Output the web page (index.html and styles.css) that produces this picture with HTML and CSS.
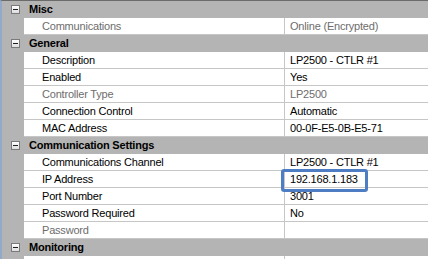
FILE: index.html
```html
<!DOCTYPE html>
<html lang="en">
<head>
    <meta charset="UTF-8">
    <title>Controller Properties</title>
    <link rel="stylesheet" href="styles.css">
</head>
<body>
    <div class="grid">
        <!-- Misc -->
        <div class="category"><span class="margin"><span class="toggle"></span></span><span class="cat-name">Misc</span></div>
        <div class="prop disabled"><span class="margin"></span><span class="name">Communications</span><span class="value">Online (Encrypted)</span></div>

        <!-- General -->
        <div class="category"><span class="margin"><span class="toggle"></span></span><span class="cat-name">General</span></div>
        <div class="prop"><span class="margin"></span><span class="name">Description</span><span class="value">LP2500 - CTLR #1</span></div>
        <div class="prop"><span class="margin"></span><span class="name">Enabled</span><span class="value">Yes</span></div>
        <div class="prop disabled"><span class="margin"></span><span class="name">Controller Type</span><span class="value">LP2500</span></div>
        <div class="prop"><span class="margin"></span><span class="name">Connection Control</span><span class="value">Automatic</span></div>
        <div class="prop"><span class="margin"></span><span class="name">MAC Address</span><span class="value">00-0F-E5-0B-E5-71</span></div>

        <!-- Communication Settings -->
        <div class="category"><span class="margin"><span class="toggle"></span></span><span class="cat-name">Communication Settings</span></div>
        <div class="prop"><span class="margin"></span><span class="name">Communications Channel</span><span class="value">LP2500 - CTLR #1</span></div>
        <div class="prop"><span class="margin"></span><span class="name">IP Address</span><span class="value callout">192.168.1.183</span></div>
        <div class="prop"><span class="margin"></span><span class="name">Port Number</span><span class="value">3001</span></div>
        <div class="prop"><span class="margin"></span><span class="name">Password Required</span><span class="value">No</span></div>
        <div class="prop disabled"><span class="margin"></span><span class="name">Password</span><span class="value"></span></div>

        <!-- Monitoring -->
        <div class="category"><span class="margin"><span class="toggle"></span></span><span class="cat-name">Monitoring</span></div>
        <div class="prop"><span class="margin"></span><span class="name"></span><span class="value"></span></div>
    </div>
</body>
</html>
```

FILE: styles.css
```css
body {
    margin: 0;
    background-color: #ffffff;
    font-family: "Liberation Sans", Arial, sans-serif;
    font-size: 11px;
    letter-spacing: -0.2px;
    color: #000000;
    overflow: hidden;
}

.grid {
    width: 428px;
    height: 259px;
    border-top: 1px solid #6b6b6b;
    border-left: 2px solid #93a9c9;
    box-sizing: border-box;
    background-color: #b4b4b4;
    overflow: hidden;
}

.category,
.prop {
    display: grid;
    grid-template-columns: 22px 260px 1fr;
    height: 17px;
    line-height: 16px;
}

.margin {
    display: flex;
    align-items: center;
    padding-left: 9px;
    background-color: #b4b4b4;
}

.category .cat-name {
    grid-column: 2 / 4;
    padding-left: 5px;
    font-weight: bold;
}

/* the little boxed minus sign */
.toggle {
    position: relative;
    width: 9px;
    height: 9px;
    box-sizing: border-box;
    border: 1px solid #7a7a7a;
    background: linear-gradient(#ffffff, #dcdcdc);
}

.toggle::after {
    content: '';
    position: absolute;
    left: 1px;
    top: 3px;
    width: 5px;
    height: 1px;
    background-color: #1e1e1e;
}

.prop .name,
.prop .value {
    background-color: #ffffff;
    border-bottom: 1px solid #c6c6c6;
    white-space: nowrap;
}

.prop .name {
    padding-left: 18px;
}

.prop .value {
    position: relative;
    padding-left: 5px;
    border-left: 1px solid #c6c6c6;
}

.prop.disabled .name,
.prop.disabled .value {
    color: #6d6d6d;
}

/* blue frame drawn over the IP address */
.callout::after {
    content: '';
    position: absolute;
    z-index: 1;
    left: -4px;
    top: -2px;
    width: 87px;
    height: 23px;
    box-sizing: border-box;
    border: 3px solid #4f7dc3;
    border-radius: 3px;
}
```
